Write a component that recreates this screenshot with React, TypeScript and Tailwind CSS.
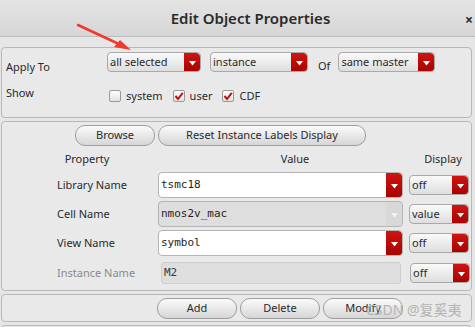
import React from 'react'

const font = { fontFamily: '"Noto Sans", "Open Sans", sans-serif' }

// small red combo button with white triangle
const Arrow = ({ grey = false, h = 'h-[20px]' }: { grey?: boolean; h?: string }) => (
    <div
        className={`${h} w-[16px] flex items-center justify-center rounded-r-[4px] ${
            grey ? 'bg-[#d8d8d8]' : 'bg-gradient-to-b from-[#d0140f] to-[#a30202]'
        }`}
    >
        <svg width="7" height="5" viewBox="0 0 7 5">
            <path d="M0 0 L7 0 L3.5 4.5 Z" fill={grey ? '#f4f4f4' : '#ffffff'} />
        </svg>
    </div>
)

const Combo = ({ label, w }: { label: string; w: string }) => (
    <div className={`${w} h-[20px] flex rounded-[4px] border border-[#a9a9a9] bg-gradient-to-b from-[#fafafa] to-[#dedede] overflow-hidden`}>
        <div className="flex-1 flex items-center pl-[2px] text-[11px] text-[#2a2a2a]">{label}</div>
        <Arrow />
    </div>
)

const Check = ({ on, label }: { on: boolean; label: string }) => (
    <div className="flex items-center gap-[5px]">
        <div className="w-[12px] h-[12px] rounded-[2px] border border-[#9a9a9a] bg-gradient-to-b from-[#ffffff] to-[#e2e2e2] flex items-center justify-center">
            {on && (
                <svg width="10" height="10" viewBox="0 0 10 10">
                    <path d="M1.5 5 L4 8 L8.8 1.8" stroke="#c0100c" strokeWidth="2" fill="none" />
                </svg>
            )}
        </div>
        <span className="text-[11px] text-[#2a2a2a]">{label}</span>
    </div>
)

const Btn = ({ label, w }: { label: string; w: string }) => (
    <div className={`${w} h-[21px] rounded-[10px] border border-[#9e9e9e] bg-gradient-to-b from-[#fbfbfb] to-[#d6d6d6] flex items-center justify-center text-[11px] text-[#2a2a2a]`}>
        {label}
    </div>
)

const Field = ({ value, white, arrow }: { value: string; white: boolean; arrow: 'red' | 'grey' }) => (
    <div className={`w-[245px] h-[26px] flex rounded-[4px] border border-[#b4b4b4] overflow-hidden ${white ? 'bg-white' : 'bg-[#dedede]'}`}>
        <div className="flex-1 flex items-center pl-[2px] text-[11px] text-[#1e1e1e]" style={{ fontFamily: '"DejaVu Sans Mono", monospace' }}>
            {value}
        </div>
        <Arrow grey={arrow === 'grey'} h="h-[26px]" />
    </div>
)

const Row = ({ label, children, display }: { label: string; children: React.ReactNode; display: string }) => (
    <div className="flex items-center h-[28px]">
        <div className="w-[156px] pl-[55px] text-[11px] text-[#2a2a2a]">{label}</div>
        {children}
        <div className="ml-[6px]">
            <Combo label={display} w="w-[60px]" />
        </div>
    </div>
)

export default function App() {
    return (
        <div className="relative w-[475px] h-[327px] bg-[#e6e6e6] overflow-hidden" style={font}>
            {/* title bar */}
            <div className="h-[37px] flex items-center justify-center relative bg-gradient-to-b from-[#e4e4e4] to-[#d6d6d6] border-b border-[#bdbdbd]">
                <span className="text-[15px] font-semibold text-[#2b2b2b] ml-[26px]">Edit Object Properties</span>
                <span className="absolute right-[2px] top-[9px] text-[14px] font-bold text-[#2b2b2b]">×</span>
            </div>

            <div className="pt-[10px] pl-[1px] pr-[3px] flex flex-col gap-[3px]">
                {/* apply to / show */}
                <div className="h-[71px] rounded-[4px] border border-[#b8b8b8] bg-[#e9e9e9] pl-[4px] pt-[3px]">
                    <div className="flex items-center h-[22px]">
                        <span className="w-[101px] text-[11px] text-[#2a2a2a] pt-[10px]">Apply To</span>
                        <Combo label="all selected" w="w-[94px]" />
                        <div className="ml-[9px]"><Combo label="instance" w="w-[98px]" /></div>
                        <span className="ml-[10px] text-[11px] text-[#2a2a2a] pt-[8px]">Of</span>
                        <div className="ml-[8px]"><Combo label="same master" w="w-[97px]" /></div>
                    </div>
                    <div className="flex items-center h-[20px] mt-[13px]">
                        <span className="w-[103px] text-[11px] text-[#2a2a2a] pb-[6px]">Show</span>
                        <div className="flex items-center gap-[10px]">
                            <Check on={false} label="system" />
                            <Check on={true} label="user" />
                            <Check on={true} label="CDF" />
                        </div>
                    </div>
                </div>

                {/* properties */}
                <div className="h-[170px] rounded-[4px] border border-[#b8b8b8] bg-[#e9e9e9] pt-[3px]">
                    <div className="flex gap-[3px] pl-[73px]">
                        <Btn label="Browse" w="w-[80px]" />
                        <Btn label="Reset Instance Labels Display" w="w-[208px]" />
                    </div>
                    <div className="flex items-center h-[24px] mt-[1px] text-[11px] text-[#2a2a2a]">
                        <span className="w-[170px] text-center">Property</span>
                        <span className="w-[246px] text-center">Value</span>
                        <span className="w-[50px] text-center">Display</span>
                    </div>
                    <div className="flex flex-col gap-[1px]">
                        <Row label="Library Name" display="off">
                            <Field value="tsmc18" white arrow="red" />
                        </Row>
                        <Row label="Cell Name" display="value">
                            <Field value="nmos2v_mac" white={false} arrow="grey" />
                        </Row>
                        <Row label="View Name" display="off">
                            <Field value="symbol" white arrow="red" />
                        </Row>
                        <div className="flex items-center h-[28px] mt-[1px]">
                            <div className="w-[159px] pl-[55px] text-[11px] text-[#8a8a8a]">Instance Name</div>
                            <div className="w-[240px] h-[22px] rounded-[3px] border border-[#cfcfcf] bg-[#dedede] flex items-center pl-[2px] text-[11px] text-[#3a3a3a]" style={{ fontFamily: '"DejaVu Sans Mono", monospace' }}>
                                M2
                            </div>
                            <div className="ml-[9px]"><Combo label="off" w="w-[60px]" /></div>
                        </div>
                    </div>
                </div>

                {/* actions */}
                <div className="h-[28px] rounded-[4px] border border-[#b8b8b8] bg-[#e9e9e9] flex items-center gap-[3px] pl-[155px]">
                    <Btn label="Add" w="w-[80px]" />
                    <Btn label="Delete" w="w-[80px]" />
                    <Btn label="Modify" w="w-[80px]" />
                </div>
                <div className="h-[10px] rounded-t-[4px] border border-[#b8b8b8] bg-[#e9e9e9]" />
            </div>

            {/* watermark */}
            <div className="absolute left-[366px] top-[299px] text-[14px] text-[#b4b4b4]" style={{ fontFamily: '"Noto Sans", "Noto Sans CJK SC", sans-serif' }}>
                CSDN @复奚夷
            </div>

            {/* red annotation arrow */}
            <svg className="absolute left-0 top-0" width="475" height="327" viewBox="0 0 475 327">
                <path d="M78 25 L121 45" stroke="#f03a30" strokeWidth="2.5" strokeLinecap="round" />
                <path d="M131 50 L114 47 L120 40 Z" fill="#f03a30" />
            </svg>
        </div>
    )
}
